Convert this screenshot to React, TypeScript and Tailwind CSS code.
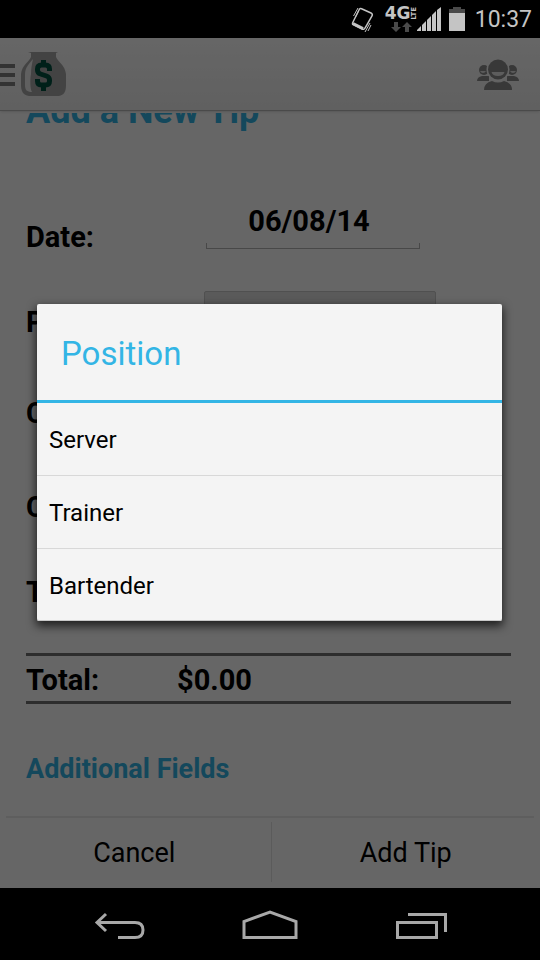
import React from "react";

const positions = ["Server", "Trainer", "Bartender"];

const StatusBar = () => (
  <div className="flex h-[38px] items-center justify-end bg-black pr-2 text-[#c4c4c4]">
    <svg className="mr-2.5 h-7 w-6" viewBox="0 0 24 28" fill="none" stroke="currentColor">
      <path d="M10 3.500 L20 8 Q22 9 21 11 L14 23 Q13 25 11 24 L2 19.500 Q1 19 2 17 L8 5 Q9 3 10 3.500Z" strokeWidth="1.5" />
      <path d="M2 18.500 L12 23.500" strokeWidth="3" />
      <path d="M2.500 11 L7 3 M4.500 12 L7.500 6 M14 27 L19 18 M17 26 L20 20" strokeWidth="1" />
    </svg>
    <div className="flex h-7 w-8 flex-col">
      <div className="flex h-4 items-center">
        <span className="font-['DejaVu_Sans'] text-[17px] font-bold leading-4">4G</span>
        <span className="rotate-180 font-['DejaVu_Sans'] text-[7px] font-bold leading-[7px] [writing-mode:vertical-rl]">LTE</span>
      </div>
      <svg className="ml-1 h-3 w-6" viewBox="0 0 24 12" fill="#4a4a4a">
        <path d="M5 1h4v5h3l-5 5-5-5h3zM16 11h4V6h3l-5-5-5 5h3z" />
      </svg>
    </div>
    <svg className="mr-2 h-6 w-6" viewBox="0 0 24 24" fill="currentColor">
      <path d="M0 24v-1l4-4v5zM5 24v-6l4-4v10zM10 24V13l4-4v15zM15 24V8l4-4v20zM20 24V3l4-3v24z" />
    </svg>
    <svg className="mr-2.5 h-6 w-4" viewBox="0 0 16 24">
      <path d="M4 0h8v2h4v4H0V2h4z" fill="#4a4a4a" />
      <path d="M0 6h16v18H0z" fill="#c4c4c4" />
    </svg>
    <span className="pt-0.5 text-[23px] leading-7">10:37</span>
  </div>
);

const MoneyBagIcon = () => (
  <svg className="h-[46px] w-[46px]" viewBox="0 0 46 46">
    <path d="M7 1h30l-2 1v4c2 5 9 8 10 17v11c0 7-2 10-7 11H8c-6-1-8-5-8-11V23C1 14 8 11 10 6V2z" fill="#a8a8a8" />
    <path d="M12 8C8 13 4 16 4 24v10c0 5 2 7 7 7-2-3-2-13-1-18 0-6 1-10 2-15z" fill="#f0f0f0" />
    <path d="M28.500 20v-2q0-4-4-4h-4q-4 0-4 4v1q0 3 3 4l6 2q3 1 3 4v1q0 4-4 4h-4q-4 0-4-4v-2" fill="none" stroke="#005040" strokeWidth="5" />
    <path d="M22.500 9v6M22.500 33v7" fill="none" stroke="#005040" strokeWidth="5" />
  </svg>
);

const PeopleIcon = () => (
  <svg className="h-[31px] w-[42px]" viewBox="0 0 42 31" fill="#8c8c8c">
    <circle cx="7" cy="11" r="5" />
    <circle cx="35" cy="11" r="5" />
    <path d="M3 12h6q-1 2-3 2t-3-2zM33 12h6q-1 2-3 2t-3-2z" fill="#e0e0e0" />
    <path d="M0 22q0-4 5-5h7v5zM42 22q0-4-5-5h-7v5z" />
    <circle cx="21" cy="10.500" r="11.500" fill="#fafafa" />
    <circle cx="21" cy="10.500" r="10" />
    <path d="M14.500 13h13q-1 4-6.500 4T14.500 13z" fill="#e8e8e8" />
    <path d="M7 31q0-7 8-9 6 3 12 0 8 2 8 9z" />
  </svg>
);

const ActionBar = () => (
  <header className="flex h-[73px] shrink-0 items-center justify-between border-b border-[#b8b8b8] bg-gradient-to-b from-white to-[#f0f0f0] pr-[21px] shadow-sm">
    <button aria-label="Open menu" className="flex items-center gap-1.5">
      <svg className="mt-0.5 h-[22px] w-[15px]" viewBox="0 0 15 22" fill="#808080">
        <path d="M0 0h15v4H0zM0 9h15v4H0zM0 18h15v4H0z" />
      </svg>
      <MoneyBagIcon />
    </button>
    <button aria-label="People">
      <PeopleIcon />
    </button>
  </header>
);

const TipForm = () => (
  <main className="mt-0.5 flex-1 overflow-hidden pl-[26px] pr-[29px] text-[29px] font-bold leading-8 text-black">
    <h1 className="-mt-[22px] mb-[67px] text-[36px] leading-10 text-[#33b5e5]">Add a New Tip</h1>
    <div className="flex h-[78px] items-center">
      <label htmlFor="date" className="w-[180px]">Date:</label>
      <div className="w-[214px] self-start">
        <input id="date" defaultValue="06/08/14" className="block h-[45px] w-full bg-transparent pr-2 text-center outline-none" />
        <div className="h-1.5 border border-t-0 border-[#b4b4b4]" />
      </div>
    </div>
    <div className="flex h-[92px] items-center">
      <label htmlFor="position" className="w-[178px]">Position:</label>
      <select id="position" className="h-[62px] w-[232px] appearance-none rounded-xs border border-[#c8c8c8] bg-[#e0e0e0] px-4 text-[24px] font-normal">
        {positions.map((p) => (
          <option key={p}>{p}</option>
        ))}
      </select>
    </div>
    <div className="flex h-[90px] items-center">Cash:</div>
    <div className="flex h-[98px] items-center">Credit:</div>
    <div className="flex h-[72px] items-center">Tip Out:</div>
    <div className="mt-[25px] flex h-[51px] items-center border-y-3 border-[#707070] pt-0.5">
      <span className="w-[151px]">Total:</span>
      <span>$0.00</span>
    </div>
    <h2 className="mt-[49px] text-[27px] text-[#33b5e5]">Additional Fields</h2>
  </main>
);

const BottomButtons = () => (
  <div className="mx-1.5 flex h-[72px] shrink-0 border-t-2 border-[#ebebeb] pt-1 pb-1.5 text-[27px] text-black">
    <button className="flex-1 border-r border-[#e4e4e4] pt-0.5 pr-2">Cancel</button>
    <button className="flex-1 pt-0.5 pl-1.5">Add Tip</button>
  </div>
);

const PositionDialog = () => (
  <div className="absolute inset-0 flex items-center bg-black/60 pb-0.5 pl-[37px] pr-[38px]">
    <div role="dialog" aria-labelledby="dialog-title" className="w-full rounded-xs bg-[#f4f4f4] shadow-[0_4px_10px_1px_rgba(0,0,0,0.7),inset_0_-1px_0_#c8c8c8]">
      <h2 id="dialog-title" className="border-b-3 border-[#33b5e5] px-6 pt-[30px] pb-[26px] text-[33px] leading-10 text-[#33b5e5]">Position</h2>
      <ul className="divide-y divide-[#d8d8d8]">
        {positions.map((p) => (
          <li key={p}>
            <button className="block h-[72px] w-full px-3 pt-0.5 text-left text-[24px] text-black">{p}</button>
          </li>
        ))}
      </ul>
    </div>
  </div>
);

const NavBar = () => (
  <nav className="flex h-[72px] shrink-0 items-center justify-between bg-black pl-[93px] pr-[93px] text-[#a8a8a8]">
    <button aria-label="Back">
      <svg className="h-8 w-[52px]" viewBox="0 0 52 32" fill="none" stroke="currentColor" strokeWidth="3">
        <path d="M13 6L4 14.500l9 8.500M4 14.500h38q8 0 8 7.500t-8 7.500H25" />
      </svg>
    </button>
    <button aria-label="Home">
      <svg className="h-8 w-14" viewBox="0 0 56 32" fill="none" stroke="currentColor" strokeWidth="3">
        <path d="M2 29.500V13.500L28 4l26 9.500v16z" />
      </svg>
    </button>
    <button aria-label="Recent apps">
      <svg className="h-8 w-[52px]" viewBox="0 0 52 32" fill="none" stroke="currentColor" strokeWidth="3">
        <path d="M2.500 14.500h39v15h-39zM13 6.500h37.500V24" />
      </svg>
    </button>
  </nav>
);

export default function App() {
  return (
    <div className="flex min-h-screen flex-col bg-white font-[Roboto,sans-serif]">
      <StatusBar />
      <div className="relative flex flex-1 flex-col">
        <ActionBar />
        <TipForm />
        <BottomButtons />
        <PositionDialog />
      </div>
      <NavBar />
    </div>
  );
}
